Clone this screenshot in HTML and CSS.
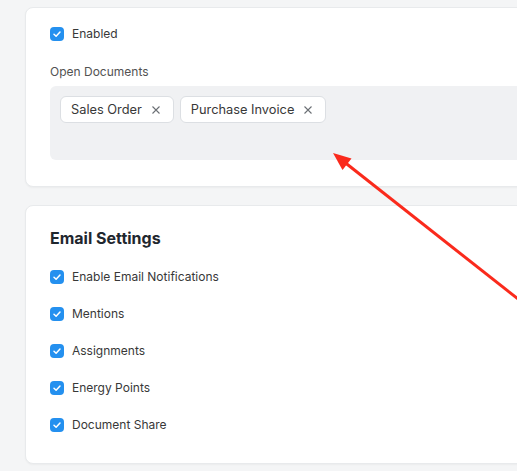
FILE: index.html
```html
<!DOCTYPE html>
<html lang="en">
<head>
    <meta charset="UTF-8">
    <meta name="viewport" content="width=device-width, initial-scale=1.0">
    <title>Notification Settings</title>
    <link rel="stylesheet" href="styles.css">
</head>
<body>
    <div class="page">
        <!-- Open documents -->
        <div class="card card-docs">
            <label class="check-row">
                <span class="checkbox"><svg viewBox="0 0 14 14"><path d="M4 7.2 L6.1 9.2 L10 5" /></svg></span>
                <span>Enabled</span>
            </label>

            <div class="field-label">Open Documents</div>
            <div class="multi-select">
                <span class="pill">Sales Order <svg class="pill-x" viewBox="0 0 8 8"><path d="M0.5 0.5 L7.5 7.5 M7.5 0.5 L0.5 7.5" /></svg></span>
                <span class="pill">Purchase Invoice <svg class="pill-x" viewBox="0 0 8 8"><path d="M0.5 0.5 L7.5 7.5 M7.5 0.5 L0.5 7.5" /></svg></span>
            </div>
        </div>

        <!-- Email settings -->
        <div class="card card-email">
            <h3>Email Settings</h3>
            <div class="check-list">
                <label class="check-row">
                    <span class="checkbox"><svg viewBox="0 0 14 14"><path d="M4 7.2 L6.1 9.2 L10 5" /></svg></span>
                    <span>Enable Email Notifications</span>
                </label>
                <label class="check-row">
                    <span class="checkbox"><svg viewBox="0 0 14 14"><path d="M4 7.2 L6.1 9.2 L10 5" /></svg></span>
                    <span>Mentions</span>
                </label>
                <label class="check-row">
                    <span class="checkbox"><svg viewBox="0 0 14 14"><path d="M4 7.2 L6.1 9.2 L10 5" /></svg></span>
                    <span>Assignments</span>
                </label>
                <label class="check-row">
                    <span class="checkbox"><svg viewBox="0 0 14 14"><path d="M4 7.2 L6.1 9.2 L10 5" /></svg></span>
                    <span>Energy Points</span>
                </label>
                <label class="check-row">
                    <span class="checkbox"><svg viewBox="0 0 14 14"><path d="M4 7.2 L6.1 9.2 L10 5" /></svg></span>
                    <span>Document Share</span>
                </label>
            </div>
        </div>
    </div>

    <!-- annotation arrow -->
    <svg class="annotation" viewBox="0 0 517 471">
        <line x1="343" y1="161" x2="570" y2="340" />
        <polygon points="333,153 342.5,170 351.5,158.5" />
    </svg>
</body>
</html>
```

FILE: styles.css
```css
html, body {
    margin: 0;
    padding: 0;
}
body {
    font-family: Inter, "Noto Sans", sans-serif;
    font-size: 12px;
    color: #383838;
    background-color: #f4f5f6;
    overflow: hidden;
    height: 471px;
    position: relative;
}
.page {
    width: 720px;
    padding: 7px 0 0 25px;
}
.card {
    background-color: white;
    border: 1px solid #e8eaec;
    border-radius: 8px;
    box-shadow: 0 1px 2px rgba(0, 0, 0, 0.04);
    margin-bottom: 18px;
}
.card-docs {
    padding: 19px 24px 26px;
}
.card-email {
    padding: 20px 24px 31px;
}
.check-row {
    display: flex;
    align-items: center;
    gap: 8px;
    height: 14px;
    line-height: 14px;
    color: #383838;
}
.checkbox {
    width: 14px;
    height: 14px;
    border-radius: 4px;
    background-color: #2490ef;
    display: inline-flex;
}
.checkbox svg {
    width: 14px;
    height: 14px;
}
.checkbox path {
    fill: none;
    stroke: white;
    stroke-width: 1.5;
    stroke-linecap: round;
    stroke-linejoin: round;
}
.field-label {
    margin-top: 23px;
    line-height: 16px;
    color: #525252;
}
.multi-select {
    margin-top: 6px;
    height: 54px;
    padding: 10px;
    background-color: #f0f1f3;
    border-radius: 6px;
    display: flex;
    align-items: flex-start;
    gap: 6px;
}
.pill {
    display: inline-flex;
    align-items: center;
    gap: 10px;
    height: 25px;
    padding: 0 13px 0 10px;
    font-size: 12.8px;
    background-color: white;
    border: 1px solid #dcdfe3;
    border-radius: 6px;
    color: #383838;
}
.pill-x {
    width: 8px;
    height: 8px;
}
.pill-x path {
    stroke: #6b6f74;
    stroke-width: 1.1;
}
h3 {
    margin: 0;
    font-size: 16px;
    font-weight: 700;
    line-height: 24px;
    color: #1f272e;
}
.check-list {
    margin-top: 20px;
    display: flex;
    flex-direction: column;
    gap: 23px;
}
.annotation {
    position: absolute;
    left: 0;
    top: 0;
    width: 517px;
    height: 471px;
}
.annotation line {
    stroke: #fa2a1c;
    stroke-width: 3;
}
.annotation polygon {
    fill: #fa2a1c;
}
```
